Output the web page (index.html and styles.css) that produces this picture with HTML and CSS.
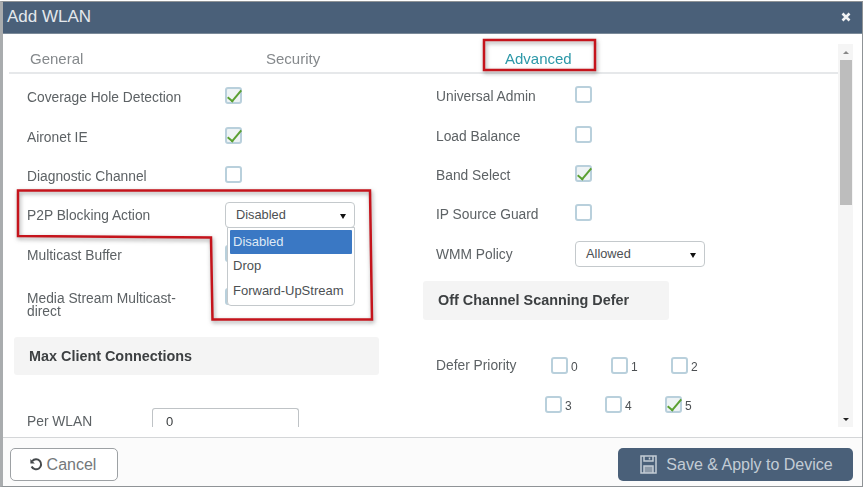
FILE: index.html
```html
<!DOCTYPE html>
<html lang="en">
<head>
    <meta charset="UTF-8">
    <title>Add WLAN</title>
    <link rel="stylesheet" href="styles.css">
</head>
<body>
    <div class="modal">
        <div class="modal-header">
            <span class="modal-title">Add WLAN</span>
            <svg class="close-icon" width="10" height="10" viewBox="0 0 10 10"><path d="M1.5 1.5l7 7M8.5 1.5l-7 7"/></svg>
        </div>

        <div class="modal-body">
            <div class="scroll-area">
                <div class="tabs">
                    <span class="tab tab-general">General</span>
                    <span class="tab tab-security">Security</span>
                    <span class="tab tab-advanced">Advanced</span>
                </div>

                <div class="columns">
                    <div class="column column-left">
                        <div class="row"><label>Coverage Hole Detection</label><span class="check on"></span></div>
                        <div class="row"><label>Aironet IE</label><span class="check on"></span></div>
                        <div class="row"><label>Diagnostic Channel</label><span class="check"></span></div>
                        <div class="row">
                            <label>P2P Blocking Action</label>
                            <div class="select select-open">
                                Disabled
                                <div class="menu">
                                    <div class="menu-item selected">Disabled</div>
                                    <div class="menu-item">Drop</div>
                                    <div class="menu-item">Forward-UpStream</div>
                                </div>
                            </div>
                        </div>
                        <div class="row"><label>Multicast Buffer</label><span class="check"></span></div>
                        <div class="row row-tall"><label class="label-wrap">Media Stream Multicast-direct</label><span class="check"></span></div>
                        <div class="section-title section-left">Max Client Connections</div>
                        <div class="row row-input"><label class="label-short">Per WLAN</label><div class="text-input">0</div></div>
                    </div>

                    <div class="column column-right">
                        <div class="row"><label>Universal Admin</label><span class="check"></span></div>
                        <div class="row"><label>Load Balance</label><span class="check"></span></div>
                        <div class="row"><label>Band Select</label><span class="check on"></span></div>
                        <div class="row"><label>IP Source Guard</label><span class="check"></span></div>
                        <div class="row"><label>WMM Policy</label><div class="select">Allowed</div></div>
                        <div class="section-title section-right">Off Channel Scanning Defer</div>
                        <div class="priority-row priority-first">
                            <label class="label-priority">Defer Priority</label>
                            <span class="prio"><span class="check"></span>0</span>
                            <span class="prio"><span class="check"></span>1</span>
                            <span class="prio"><span class="check"></span>2</span>
                        </div>
                        <div class="priority-row priority-second">
                            <span class="prio"><span class="check"></span>3</span>
                            <span class="prio"><span class="check"></span>4</span>
                            <span class="prio"><span class="check on"></span>5</span>
                        </div>
                    </div>
                </div>
            </div>

            <div class="scrollbar">
                <span class="arrow-up"></span>
                <span class="thumb"></span>
                <span class="arrow-down"></span>
            </div>
        </div>

        <div class="modal-footer">
            <button class="btn btn-cancel">
                <svg width="15" height="15" viewBox="0 0 15 15"><path class="undo" d="M3.2 4.2A5 5 0 1 1 2.6 9.5"/><path class="undo-head" d="M1.4 2v4.4h4.4z"/></svg>
                Cancel
            </button>
            <button class="btn btn-save">
                <svg width="17" height="19" viewBox="0 0 17 19"><path class="save-fill" d="M4 11h9v7H4z"/><path class="save" d="M1 1h15v17H1zM4 1v5h9V1M4 18v-7h9v7M9.5 2.500v2"/></svg>
                Save &amp; Apply to Device
            </button>
        </div>
    </div>

    <!-- red callouts drawn on top of the screenshot -->
    <svg class="callouts" width="864" height="488" viewBox="0 0 864 488">
        <path d="M484 40H595V70H484Z"/>
        <path d="M18 190.500H370L372 319.500H212.500L211 237.500L18 236Z"/>
    </svg>
</body>
</html>
```

FILE: styles.css
```css
html, body {
    margin: 0;
    height: 100%;
    overflow: hidden;
    background: #fff;
}

body {
    font-family: "Liberation Sans", Arial, sans-serif;
    font-size: 13.800px;
    color: #5d6265;
    position: relative;
}

.modal {
    box-sizing: border-box;
    width: 863px;
    height: 486px;
    margin-top: 1px;
    border: 1px solid #8f9396;
    border-left: 3px solid #a9acae;
    display: flex;
    flex-direction: column;
    filter: blur(0.55px);
}

.modal-header {
    flex: none;
    height: 32px;
    background: #4a6079;
    border-bottom: 1px solid #7b8a99;
    color: #e4e8ec;
    display: flex;
    align-items: center;
    justify-content: space-between;
    padding: 0 11px 2px 4px;
    box-sizing: border-box;
}

.modal-title {
    font-size: 17px;
}

.close-icon path {
    stroke: #f1f3f5;
    stroke-width: 2.6;
    fill: none;
}

.modal-body {
    flex: none;
    height: 403px;
    display: flex;
    box-sizing: border-box;
    padding: 0 9px 0 6px;
}

.scroll-area {
    width: 829px;
    height: 395px;
    overflow: hidden;
}

.tabs {
    height: 40px;
    box-sizing: border-box;
    border-bottom: 2px solid #e6e8ea;
    padding-top: 11px;
    display: flex;
    align-items: center;
    font-size: 15px;
    color: #85898c;
}

.tab-general {
    margin-left: 21px;
    width: 236px;
}

.tab-security {
    width: 239px;
}

.tab-advanced {
    color: #2c98a8;
}

.columns {
    display: flex;
    padding-left: 5px;
}

.column-left {
    width: 422px;
    padding-top: 4px;
}

.column-right {
    padding-top: 3px;
}

.row {
    height: 39.4px;
    display: flex;
    align-items: center;
}

.row label {
    width: 211px;
    padding-left: 13px;
    box-sizing: border-box;
}

.column-right .row label {
    width: 139px;
    padding-left: 0;
}

.row .check {
    margin-top: -4px;
}

.row-tall {
    height: 59px;
}

.row-tall .check {
    margin-top: -16px;
}

.label-wrap {
    line-height: 13px;
    padding-right: 30px;
    padding-top: 2px;
}

.check {
    display: inline-block;
    flex: none;
    width: 17px;
    height: 17px;
    box-sizing: border-box;
    border: 2px solid #b9d0dc;
    border-radius: 3px;
    background: #fff;
    position: relative;
}

.check.on {
    background: #eef3f5;
}

.check.on::after {
    content: "";
    position: absolute;
    left: 4px;
    top: -2px;
    width: 5px;
    height: 13px;
    border: solid #5aa032;
    border-width: 0 2.5px 2.5px 0;
    transform: rotate(40deg);
}

.select {
    position: relative;
    width: 130px;
    height: 26px;
    box-sizing: border-box;
    border: 1px solid #c4c9cc;
    border-radius: 4px;
    padding: 4px 10px;
    font-size: 12.800px;
    color: #4c5053;
    background: #fff;
    margin-top: -1px;
}

.select::after {
    content: "";
    position: absolute;
    right: 8px;
    top: 11px;
    border: 3px solid transparent;
    border-top: 5px solid #111;
    border-bottom: 0;
}

.menu {
    position: absolute;
    left: 1px;
    top: 24px;
    width: 128px;
    height: 79px;
    box-sizing: border-box;
    z-index: 2;
    background: #fff;
    border: 1px solid #c4c9cc;
    border-radius: 0 0 4px 4px;
    padding: 2px 2px;
}

.menu-item {
    height: 24.500px;
    line-height: 23px;
    padding-left: 3px;
    white-space: nowrap;
    font-size: 13px;
}

.menu-item.selected {
    height: 24px;
    background: #3a78c4;
    color: #dfe9f5;
    border-radius: 1px;
}

.section-title {
    box-sizing: border-box;
    display: flex;
    align-items: center;
    background: #f4f4f4;
    border-radius: 3px;
    font-weight: bold;
    font-size: 14.400px;
    color: #3d4042;
}

.section-left {
    width: 365px;
    height: 38px;
    margin-top: 3px;
    padding-left: 15px;
}

.section-right {
    width: 246px;
    height: 39px;
    margin: 7px 0 0 -13px;
    padding-left: 15px;
}

.row-input {
    margin-top: 26px;
    align-items: flex-start;
    padding-top: 7px;
}

.row .label-short {
    width: 138px;
    padding-top: 7px;
    line-height: 13px;
}

/* cut by the end of the scrolling part, so no bottom edge */
.text-input {
    width: 147px;
    height: 19px;
    box-sizing: border-box;
    border: 1px solid #bfc3c6;
    border-bottom: 0;
    border-radius: 3px 3px 0 0;
    padding: 6px 13px 0;
    font-size: 13px;
    line-height: 13px;
    color: #3d4042;
}

.priority-row {
    display: flex;
    align-items: center;
    height: 22px;
}

.priority-first {
    margin-top: 35px;
}

.priority-second {
    margin-top: 17px;
    padding-left: 109px;
}

.label-priority {
    width: 115px;
}

.prio {
    width: 60px;
    display: flex;
    align-items: flex-end;
    gap: 3px;
    line-height: 13px;
    font-size: 12px;
    color: #4c5053;
}

.scrollbar {
    width: 15px;
    height: 383px;
    margin-top: 10px;
    background: #f5f5f5;
    position: relative;
    display: flex;
    flex-direction: column;
    align-items: center;
}

.thumb {
    width: 12px;
    height: 145px;
    margin-top: 6px;
    background: #bdbdbd;
}

.arrow-up {
    margin-top: 7px;
    border: 3px solid transparent;
    border-bottom: 3px solid #888;
    border-top: 0;
}

.arrow-down {
    margin-top: auto;
    margin-bottom: 6px;
    border: 3px solid transparent;
    border-top: 3px solid #222;
    border-bottom: 0;
}

.modal-footer {
    flex: 1;
    background: #fbfbfb;
    border-top: 1px solid #d4d6d8;
    display: flex;
    justify-content: space-between;
    align-items: flex-start;
    padding: 10px 9px 0 7px;
}

.btn {
    height: 33px;
    border-radius: 5px;
    font: 16px "Liberation Sans", Arial, sans-serif;
    display: flex;
    align-items: center;
    justify-content: center;
    gap: 3px;
    padding: 0 3px 0 0;
}

.btn-cancel {
    width: 108px;
    background: #fff;
    border: 1px solid #9da1a4;
    color: #74787b;
}

.btn-save {
    width: 235px;
    background: #4a6079;
    border: 0;
    color: #c3ccd5;
    gap: 9px;
    padding: 0 0 0 2px;
}

.undo {
    fill: none;
    stroke: #44484b;
    stroke-width: 2;
}

.undo-head {
    fill: #44484b;
}

.save {
    fill: none;
    stroke: #c3ccd5;
    stroke-width: 1.500;
}

.save-fill {
    fill: #8d9aa8;
}

.callouts {
    position: absolute;
    left: 0;
    top: 0;
    z-index: 5;
    pointer-events: none;
    filter: drop-shadow(1px 2px 2px rgba(60, 60, 60, 0.5));
}

.callouts path {
    fill: none;
    stroke: #c5141c;
    stroke-width: 2.500;
}
```
